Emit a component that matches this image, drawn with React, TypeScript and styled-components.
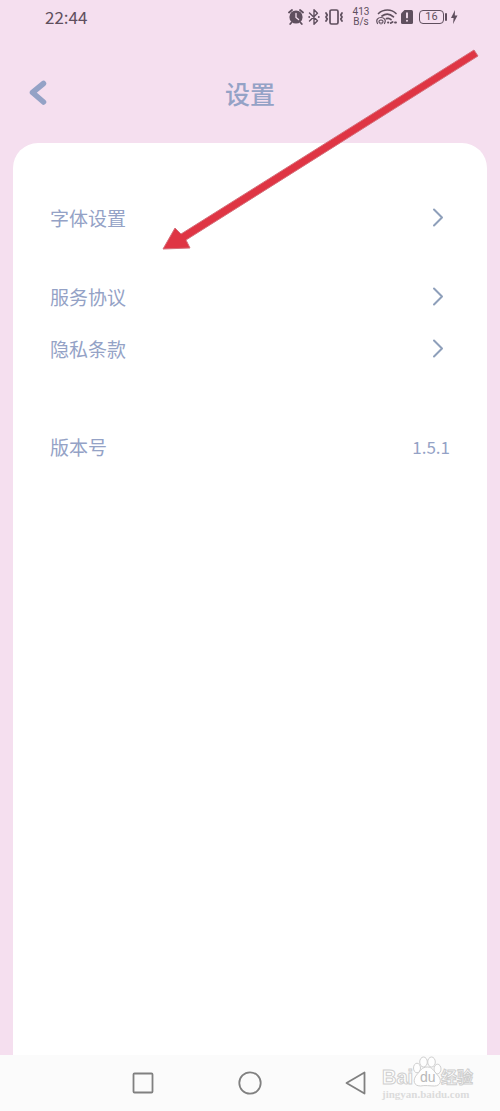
import React from "react";
import styled, { createGlobalStyle } from "styled-components";

const ink = "#94a2c6";
const chevronInk = "#8e9fba";
const pink = "#f5dfef";
const statusInk = "#5f4f5e";
const navInk = "#808080";

const GlobalStyle = createGlobalStyle`
  *, *::before, *::after { box-sizing: border-box; }
  body {
    margin: 0;
    background: ${pink};
    font-family: "Noto Sans CJK SC", "Noto Sans", sans-serif;
  }
`;

const Screen = styled.div`
  position: relative;
  display: flex;
  flex-direction: column;
  min-height: 100vh;
  background: ${pink};
`;

const StatusBar = styled.div`
  display: flex;
  align-items: center;
  justify-content: space-between;
  height: 34px;
  padding: 0 42px 0 45px;
  color: ${statusInk};
`;

const Clock = styled.time`
  font-size: 17px;
  line-height: 24px;
`;

const StatusIcons = styled.div`
  display: flex;
  align-items: center;
  gap: 3px;
`;

const NetSpeed = styled.div`
  width: 24px;
  margin-left: 2px;
  font-family: Roboto, sans-serif;
  font-size: 10px;
  line-height: 10px;
  text-align: center;
`;

const Battery = styled.div`
  display: flex;
  align-items: center;
  gap: 1px;
  margin-left: 3px;
  font-family: Roboto, sans-serif;
  font-size: 11px;
  line-height: 12px;
`;

const BatteryBody = styled.span`
  width: 25px;
  border: 1px solid ${statusInk};
  border-radius: 4px;
  text-align: center;
`;

const BatteryTip = styled.span`
  width: 2px;
  height: 8px;
  border-radius: 1px;
  background: ${statusInk};
`;

const Header = styled.header`
  display: grid;
  grid-template-columns: 76px 1fr 76px;
  align-items: center;
  height: 109px;
  padding-top: 8px;
`;

const BackButton = styled.button`
  display: flex;
  align-items: center;
  justify-content: center;
  height: 48px;
  padding: 0;
  border: 0;
  background: none;
  cursor: pointer;
`;

const Title = styled.h1`
  margin: 0;
  color: ${ink};
  font-size: 25px;
  font-weight: 500;
  line-height: 36px;
  text-align: center;
`;

const Card = styled.main`
  flex: 1;
  display: flex;
  flex-direction: column;
  margin: 0 13px;
  padding: 49px 37px;
  border-radius: 25px 25px 0 0;
  background: #fff;
`;

const Group = styled.section<{ $gap?: number }>`
  display: flex;
  flex-direction: column;
  margin-top: ${({ $gap = 0 }) => $gap}px;
`;

const rowLayout = `
  display: flex;
  align-items: center;
  justify-content: space-between;
  width: 100%;
  height: 52px;
  color: ${ink};
  font-size: 19px;
  line-height: 28px;
`;

const LinkRow = styled.button`
  ${rowLayout}
  padding: 0 6px 0 0;
  border: 0;
  background: none;
  font-family: inherit;
  cursor: pointer;
`;

const InfoRow = styled.div`
  ${rowLayout}
`;

const Version = styled.span`
  font-size: 17px;
`;

const NavBar = styled.nav`
  position: relative;
  display: flex;
  align-items: center;
  justify-content: center;
  gap: 82px;
  height: 56px;
  background: #fbfbfb;
`;

const NavButton = styled.button`
  display: flex;
  width: 24px;
  height: 24px;
  padding: 0;
  border: 0;
  background: none;
  cursor: pointer;
`;

const Pointer = styled.svg`
  position: absolute;
  top: 44px;
  right: 16px;
  pointer-events: none;
`;

const Watermark = styled.svg`
  position: absolute;
  right: 24px;
  bottom: 8px;
  pointer-events: none;
`;

const Chevron = () => (
  <svg width="12" height="20" viewBox="0 0 12 20" fill="none" aria-hidden="true">
    <path d="M2 1.500L10 9.500l-8 8" stroke={chevronInk} strokeWidth="2" strokeLinecap="round" strokeLinejoin="round" />
  </svg>
);

const AlarmIcon = () => (
  <svg width="16" height="18" viewBox="0 0 16 18" aria-hidden="true">
    <circle cx="8" cy="9" r="6.600" fill={statusInk} />
    <path d="M1 4.500L4 2M15 4.500L12 2M3.500 14.500L2.200 16M12.500 14.500l1.300 1.500" stroke={statusInk} strokeWidth="1.800" strokeLinecap="round" />
    <path d="M8 5.500V9.500l2.600 2" fill="none" stroke={pink} strokeWidth="1.300" strokeLinecap="round" />
  </svg>
);

const BluetoothIcon = () => (
  <svg width="14" height="18" viewBox="0 0 14 18" aria-hidden="true">
    <path d="M2.500 5l8 7.800L7 16.300V1.700l3.500 3.500-8 7.800" fill="none" stroke={statusInk} strokeWidth="1.400" strokeLinejoin="round" strokeLinecap="round" />
    <circle cx="2.200" cy="9" r=".9" fill={statusInk} />
    <circle cx="11.800" cy="9" r=".9" fill={statusInk} />
  </svg>
);

const VibrateIcon = () => (
  <svg width="20" height="18" viewBox="0 0 20 18" fill="none" stroke={statusInk} strokeLinecap="round" strokeLinejoin="round" aria-hidden="true">
    <rect x="6" y="2" width="8" height="14" rx="1.500" strokeWidth="1.700" />
    <path d="M2 5l1.200 2L2 9l1.200 2L2 13M18 5l-1.200 2L18 9l-1.200 2L18 13" strokeWidth="1.800" />
  </svg>
);

const WifiIcon = () => (
  <svg width="22" height="18" viewBox="0 0 22 18" fill="none" stroke={statusInk} strokeLinecap="round" aria-hidden="true">
    <path d="M2.500 5.500C7.500.8 15.500.8 20 5.500M6 8c3.500-2.600 8-2.300 11.500.8M10.500 10.600c1.800-.6 3.300-.2 4.500 1" strokeWidth="1.700" />
    <path d="M1.500 15.500C-.5 12 2 9.500 5 9.500s5.500 2.500 3.500 6M3.500 15c-1.200-2 0-3 1.500-3s2.700 1 1.500 3M5 14.500V16" strokeWidth="1.200" />
    <path d="M12 14.500h.3M14.800 15l1.800-1M19 14.500h1" strokeWidth="1.900" />
  </svg>
);

const SimIcon = () => (
  <svg width="12" height="16" viewBox="0 0 12 16" aria-hidden="true">
    <path d="M3.500 1h7A1.500 1.500 0 0 1 12 2.500v11a1.500 1.500 0 0 1-1.500 1.500h-9A1.500 1.500 0 0 1 0 13.500V4.500z" fill={statusInk} />
    <path d="M6 4.200v4.200M6 11.600v.2" stroke={pink} strokeWidth="1.900" strokeLinecap="round" />
  </svg>
);

const BoltIcon = () => (
  <svg width="8" height="14" viewBox="0 0 8 14" aria-hidden="true">
    <path d="M5 0L1 8h2.600L3 14 7.500 5.500H4.800z" fill={statusInk} />
  </svg>
);

export default function App() {
  return (
    <>
      <GlobalStyle />
      <Screen>
        <StatusBar>
          <Clock>22:44</Clock>
          <StatusIcons>
            <AlarmIcon />
            <BluetoothIcon />
            <VibrateIcon />
            <NetSpeed>413 B/s</NetSpeed>
            <WifiIcon />
            <SimIcon />
            <Battery>
              <BatteryBody>16</BatteryBody>
              <BatteryTip />
            </Battery>
            <BoltIcon />
          </StatusIcons>
        </StatusBar>

        <Header>
          <BackButton aria-label="返回">
            <svg width="18" height="26" viewBox="0 0 18 26" fill="none" aria-hidden="true">
              <path d="M14.500 3.500L3.500 12.500l11 9.500" stroke={ink} strokeWidth="5.500" strokeLinecap="round" strokeLinejoin="round" />
            </svg>
          </BackButton>
          <Title>设置</Title>
        </Header>

        <Card>
          <Group>
            <LinkRow>字体设置<Chevron /></LinkRow>
          </Group>
          <Group $gap={27}>
            <LinkRow>服务协议<Chevron /></LinkRow>
            <LinkRow>隐私条款<Chevron /></LinkRow>
          </Group>
          <Group $gap={46}>
            <InfoRow>版本号<Version>1.5.1</Version></InfoRow>
          </Group>
        </Card>

        <NavBar aria-label="系统导航">
          <NavButton aria-label="最近任务">
            <svg width="24" height="24" viewBox="0 0 24 24" fill="none" stroke={navInk} strokeWidth="1.800">
              <rect x="1.500" y="2.500" width="19" height="19" rx="1" />
            </svg>
          </NavButton>
          <NavButton aria-label="主页">
            <svg width="24" height="24" viewBox="0 0 24 24" fill="none" stroke={navInk} strokeWidth="1.800">
              <circle cx="12" cy="12" r="10.700" />
            </svg>
          </NavButton>
          <NavButton aria-label="后退">
            <svg width="24" height="24" viewBox="0 0 24 24" fill="none" stroke={navInk} strokeWidth="1.800" strokeLinejoin="round">
              <path d="M20.500 1.500v21L2.500 12z" />
            </svg>
          </NavButton>
          <Watermark width="96" height="48" viewBox="0 0 96 48">
            <g fill="#fefefe" stroke="#cfcfcf" strokeWidth="1">
              <text x="2" y="29" fontFamily="Liberation Sans, sans-serif" fontSize="20" fontWeight="700">Bai</text>
              <text x="61" y="28" fontFamily="Noto Sans CJK SC, sans-serif" fontSize="16" fontWeight="700">经验</text>
              <ellipse cx="37" cy="13" rx="3.500" ry="4.800" />
              <ellipse cx="43.500" cy="7" rx="3.800" ry="5" />
              <ellipse cx="51.500" cy="7" rx="3.800" ry="5" />
              <ellipse cx="57.500" cy="14" rx="3.500" ry="4.800" />
              <path d="M47.500 12c5 0 6 4 10 8 5 5 3 11-3 11-4 0-10-1-14 0-7 0-8-6-4-11 4-4 5-8 11-8z" />
            </g>
            <text x="40" y="27" fill="#b8b8b8" fontFamily="Liberation Sans, sans-serif" fontSize="14">du</text>
            <text x="2" y="43" fill="#dcdcdc" fontFamily="Liberation Serif, serif" fontSize="11" fontWeight="700">jingyan.baidu.com</text>
          </Watermark>
        </NavBar>

        <Pointer width="324" height="210" viewBox="0 0 324 210" aria-hidden="true">
          <path
            d="M314 6L318 12L26 196L30 204L3 205L15 184L21 190Z"
            fill="#df3544"
            stroke="#d56f7a"
            strokeWidth="1"
          />
        </Pointer>
      </Screen>
    </>
  );
}
